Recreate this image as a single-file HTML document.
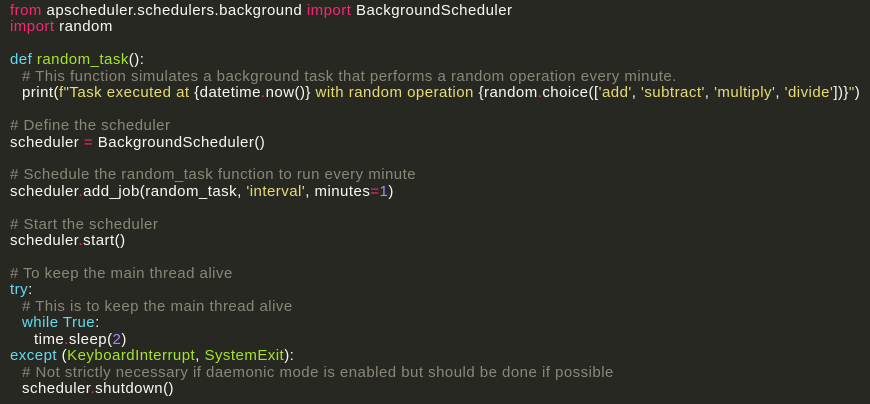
<!DOCTYPE html>
<html><head><meta charset="utf-8"><style>
html,body{margin:0;padding:0;background:#272822;width:870px;height:404px;overflow:hidden}
pre{margin:0;padding:3px 0 0 10px;font-family:"Liberation Sans",sans-serif;font-size:15px;letter-spacing:0.47px;line-height:16.43px;color:#f8f8f2;white-space:pre}
.k{color:#f92672}.d{color:#66d9ef}.f{color:#a6e22e}.s{color:#e6db74}.c{color:#8a8778}.n{color:#ae81ff}
.i1{padding-left:12px}.i2{padding-left:24px}
</style></head><body><pre><span class="k">from</span> apscheduler.schedulers.background <span class="k">import</span> BackgroundScheduler
<span class="k">import</span> random

<span class="d">def</span> <span class="f">random_task</span>():
<span class="i1"></span><span class="c"># This function simulates a background task that performs a random operation every minute.</span>
<span class="i1"></span>print(<span class="s">f"Task executed at </span>{datetime<span class="k">.</span>now()}<span class="s"> with random operation </span>{random<span class="k">.</span>choice([<span class="s">'add'</span>, <span class="s">'subtract'</span>, <span class="s">'multiply'</span>, <span class="s">'divide'</span>])}<span class="s">"</span>)

<span class="c"># Define the scheduler</span>
scheduler <span class="k">=</span> BackgroundScheduler()

<span class="c"># Schedule the random_task function to run every minute</span>
scheduler<span class="k">.</span>add_job(random_task, <span class="s">'interval'</span>, minutes<span class="k">=</span><span class="n">1</span>)

<span class="c"># Start the scheduler</span>
scheduler<span class="k">.</span>start()

<span class="c"># To keep the main thread alive</span>
<span class="d">try</span>:
<span class="i1"></span><span class="c"># This is to keep the main thread alive</span>
<span class="i1"></span><span class="d">while</span> <span class="d">True</span>:
<span class="i2"></span>time<span class="k">.</span>sleep(<span class="n">2</span>)
<span class="d">except</span> (<span class="f">KeyboardInterrupt</span>, <span class="f">SystemExit</span>):
<span class="i1"></span><span class="c"># Not strictly necessary if daemonic mode is enabled but should be done if possible</span>
<span class="i1"></span>scheduler<span class="k">.</span>shutdown()</pre></body></html>
